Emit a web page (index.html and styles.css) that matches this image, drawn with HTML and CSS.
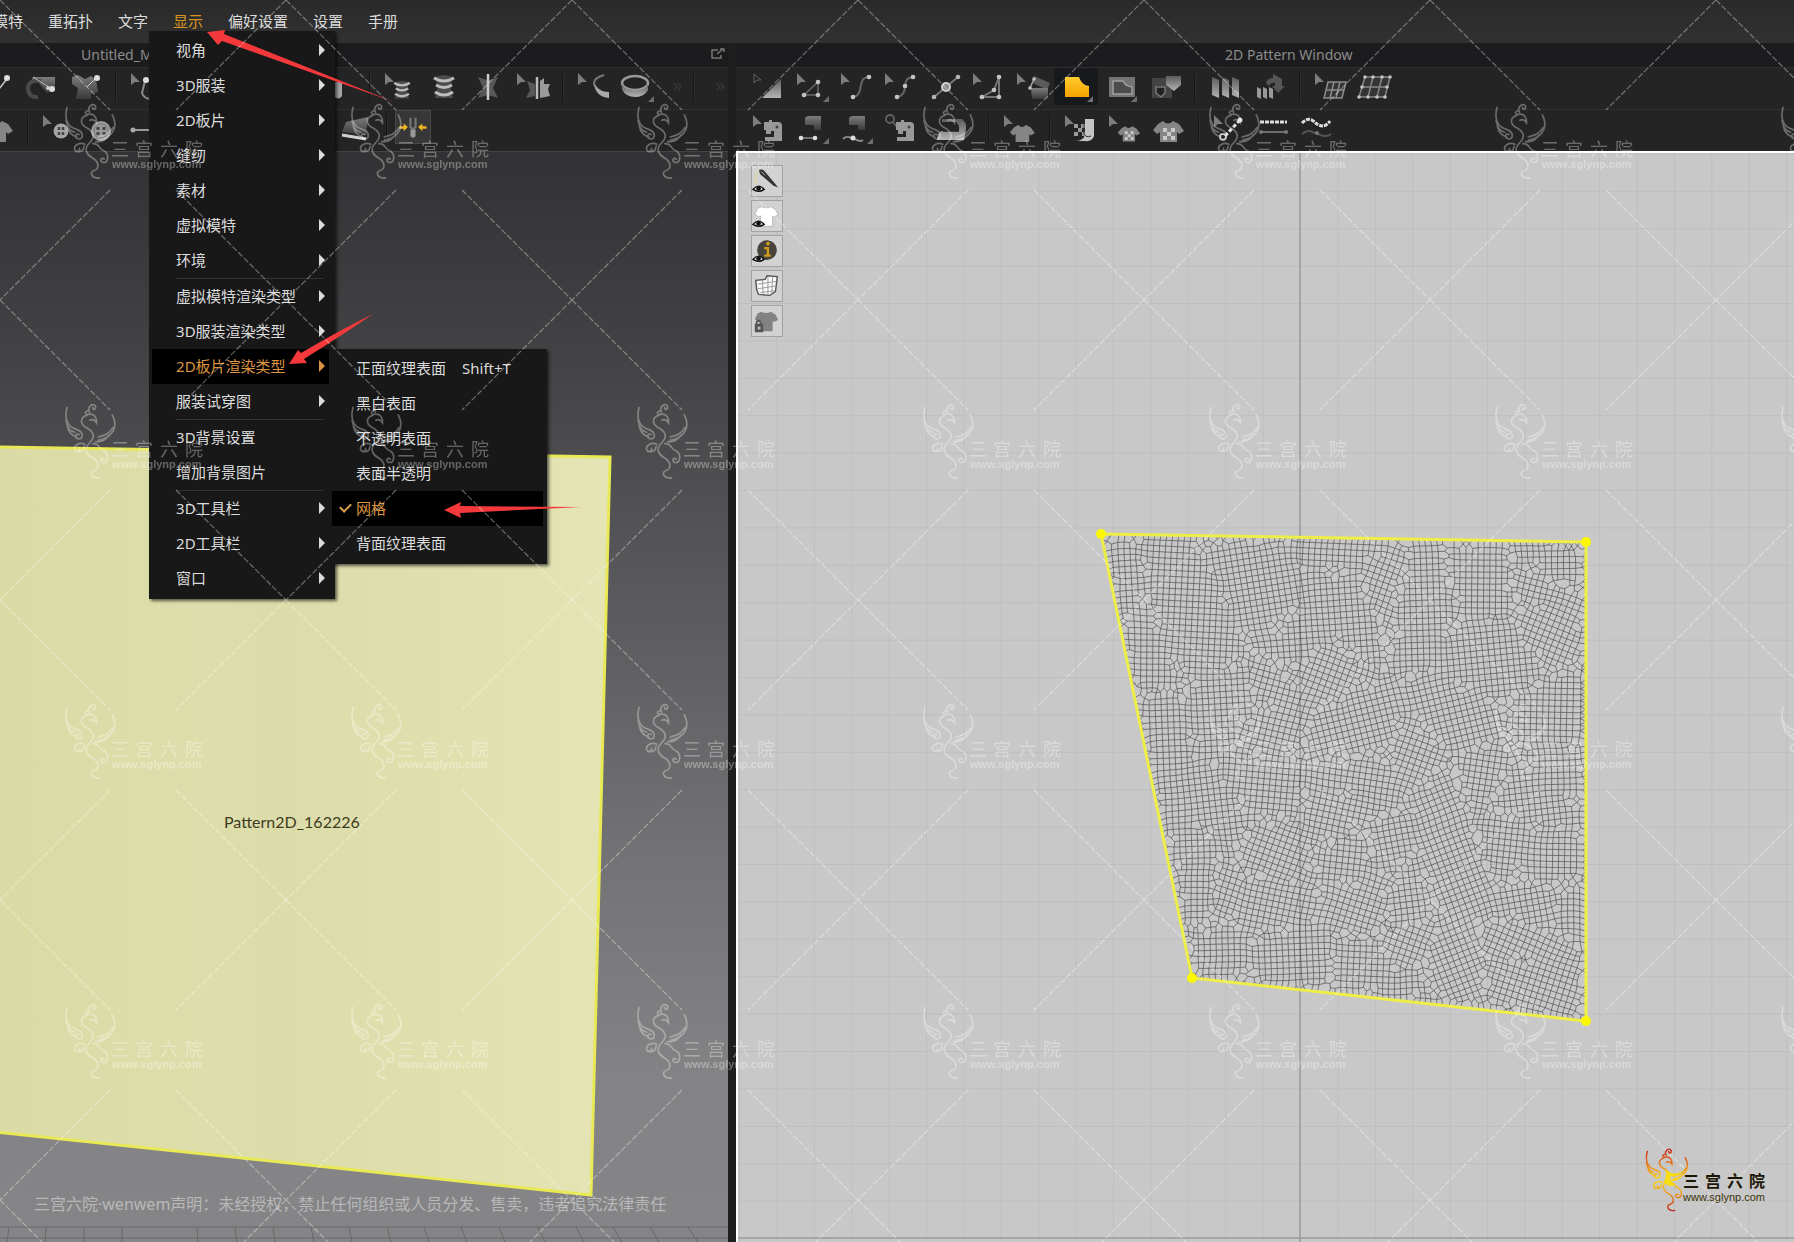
FILE: index.html
```html
<!DOCTYPE html>
<html lang="zh-CN">
<head>
    <meta charset="UTF-8">
    <meta name="viewport" content="width=device-width, initial-scale=1.0">
    <title>2D Pattern Window</title>
    <link rel="stylesheet" href="styles.css">
</head>
<body>
    <!-- icon symbols -->
    <svg class="defs" width="0" height="0" aria-hidden="true">
        <defs>
            <linearGradient id="metal" x1="0" y1="0" x2="0" y2="1">
                <stop offset="0" stop-color="#5c5c5c"/>
                <stop offset="1" stop-color="#b4b4b4"/>
            </linearGradient>
            <linearGradient id="metalDown" x1="0" y1="0" x2="0" y2="1">
                <stop offset="0" stop-color="#7c7c7c"/>
                <stop offset="1" stop-color="#3a3a3a"/>
            </linearGradient>
            <linearGradient id="gold" x1="0" y1="0" x2="0" y2="1">
                <stop offset="0" stop-color="#ffcb2e"/>
                <stop offset="1" stop-color="#f5a300"/>
            </linearGradient>
            <linearGradient id="fire" gradientUnits="userSpaceOnUse" x1="0" y1="75" x2="0" y2="300">
                <stop offset="0" stop-color="#c8201c"/>
                <stop offset="0.3" stop-color="#ee8a14"/>
                <stop offset="0.5" stop-color="#f9dc12"/>
                <stop offset="0.7" stop-color="#f0a018"/>
                <stop offset="1" stop-color="#c01818"/>
            </linearGradient>
        </defs>
        <symbol id="cursor" viewBox="0 0 40 36"><path d="M5 4v12l4-3h5z" fill="#7d7d7d"/></symbol>
        <symbol id="corner" viewBox="0 0 40 36"><path d="M37 27v6h-6z" fill="#6e6e6e"/></symbol>
        <symbol id="i-triangle" viewBox="0 0 40 36">
            <path d="M6 5v9l3-3h4z" fill="none" stroke="#5f5f5f"/>
            <path d="M33 10v19H14z" fill="url(#metal)"/>
        </symbol>
        <symbol id="i-polygon" viewBox="0 0 40 36">
            <use href="#cursor"/><use href="#corner"/>
            <path d="M26 13v13H12z" fill="none" stroke="#6a6a6a" stroke-width="1.5"/>
            <g fill="#c4c4c4"><circle cx="26" cy="13" r="2.3"/><circle cx="26" cy="26" r="2.3"/><circle cx="12" cy="26" r="2.3"/></g>
        </symbol>
        <symbol id="i-curve" viewBox="0 0 40 36">
            <use href="#cursor"/>
            <path d="M33 8c-13 0-4 19-16 20" fill="none" stroke="#666" stroke-width="2"/>
            <g fill="#c4c4c4"><circle cx="33" cy="8" r="2.3"/><circle cx="17" cy="28" r="2.3"/></g>
        </symbol>
        <symbol id="i-curve-point" viewBox="0 0 40 36">
            <use href="#cursor"/>
            <path d="M33 8c-8 1-7 5-8 9 0 6-2 10-8 11" fill="none" stroke="#666" stroke-width="2"/>
            <g fill="#c4c4c4"><circle cx="33" cy="8" r="2.3"/><circle cx="25" cy="17" r="2.3"/><circle cx="17" cy="28" r="2.3"/></g>
        </symbol>
        <symbol id="i-add-point" viewBox="0 0 40 36">
            <path d="M34 8L10 28" stroke="#777" stroke-width="2"/>
            <g fill="#b4b4b4"><circle cx="34" cy="8" r="2.3"/><circle cx="10" cy="28" r="2.3"/></g>
            <circle cx="22" cy="18" r="4" fill="#8a8a8a" stroke="#d0d0d0" stroke-width="2"/>
        </symbol>
        <symbol id="i-notch" viewBox="0 0 40 36">
            <use href="#cursor"/>
            <path d="M31 8v20H14l12-7z" fill="none" stroke="#757575" stroke-width="2"/>
            <g fill="#c4c4c4"><circle cx="31" cy="8" r="2.3"/><circle cx="26" cy="21" r="2.3"/><circle cx="31" cy="28" r="2.3"/><circle cx="14" cy="28" r="2.3"/></g>
        </symbol>
        <symbol id="i-fold" viewBox="0 0 40 36">
            <use href="#cursor"/>
            <path d="M22 7l16 7-3 7-14-7z" fill="#5a5a5a"/>
            <path d="M19 19h17v11H20z" fill="url(#metalDown)"/>
            <path d="M22 10l-4 9" stroke="#a8a8a8" stroke-width="1.5"/>
            <g fill="#c4c4c4"><circle cx="22" cy="10" r="1.8"/><circle cx="18" cy="19" r="1.8"/></g>
        </symbol>
        <symbol id="i-pattern" viewBox="0 0 40 36">
            <use href="#corner"/>
            <path d="M9 8h14c2 5 4 8 10 9v11H9z" fill="url(#gold)"/>
        </symbol>
        <symbol id="i-inner" viewBox="0 0 40 36">
            <use href="#corner"/>
            <path d="M9 8h26v20H9z" fill="#747474"/>
            <path d="M13 12h10c2 4 4 5 9 6v7H13z" fill="#4c4c4c" stroke="#a0a0a0" stroke-width="1.5"/>
        </symbol>
        <symbol id="i-trace" viewBox="0 0 40 36">
            <path d="M8 9h20v20H8z" fill="#434343"/>
            <path d="M12 18h9v6l-4 4-5-4z" fill="#222" stroke="#777" stroke-width="1.5"/>
            <path d="M22 7h15v9l-7 6-8-6z" fill="url(#metal)"/>
        </symbol>
        <symbol id="i-pleats" viewBox="0 0 40 36">
            <path d="M7 8l7 3v18l-7-3zM17 8l7 3v18l-7-3zM27 8l7 3v18l-7-3z" fill="url(#metal)"/>
        </symbol>
        <symbol id="i-pleat-sew" viewBox="0 0 40 36">
            <path d="M8 18l4 2v10l-4-2zM14 18l4 2v10l-4-2zM20 18l4 2v10l-4-2z" fill="#999"/>
            <path d="M17 14q1-5 7-5V5l9 5v7h3l-7 7-6-7h3v-3q-4-1-6 3z" fill="#555"/>
        </symbol>
        <symbol id="i-mesh-edit" viewBox="0 0 40 36">
            <use href="#cursor"/>
            <path d="M18 13h18l-4 16H14zM16 21h18M24 13l-4 16M30 13l-4 16" fill="#343434" stroke="#8c8c8c" stroke-width="1.5"/>
        </symbol>
        <symbol id="i-mesh" viewBox="0 0 40 36">
            <path d="M11 8h25l-5 20H5zM8 18h25M19 8l-5 20M28 8l-5 20" fill="#343434" stroke="#858585" stroke-width="1.5"/>
            <g fill="#c4c4c4"><circle cx="11" cy="8" r="1.8"/><circle cx="19" cy="8" r="1.8"/><circle cx="28" cy="8" r="1.8"/><circle cx="36" cy="8" r="1.8"/><circle cx="8" cy="18" r="1.8"/><circle cx="33" cy="18" r="1.8"/><circle cx="5" cy="28" r="1.8"/><circle cx="14" cy="28" r="1.8"/><circle cx="23" cy="28" r="1.8"/><circle cx="31" cy="28" r="1.8"/></g>
        </symbol>
        <symbol id="machine" viewBox="0 0 40 36">
            <path d="M16 11h5V9h3v2h6q4 0 4 4v15H17v-4h9v-6h-3v3h-5v-4h-2z" fill="#999"/>
            <circle cx="29" cy="16" r="1.500" fill="#444"/>
        </symbol>
        <symbol id="i-sew" viewBox="0 0 40 36"><use href="#cursor"/><use href="#machine"/></symbol>
        <symbol id="i-sew-segment" viewBox="0 0 40 36">
            <path d="M13 8q0-3 4-3h12v14h-7v-5h-9z" fill="url(#metalDown)"/><use href="#corner"/>
            <path d="M9 27h14" stroke="#888" stroke-width="1.5"/>
            <g fill="#ddd"><circle cx="9" cy="27" r="2.3"/><circle cx="23" cy="27" r="2.3"/></g>
        </symbol>
        <symbol id="i-sew-free" viewBox="0 0 40 36">
            <path d="M13 8q0-3 4-3h12v14h-7v-5h-9z" fill="url(#metalDown)"/><use href="#corner"/>
            <path d="M7 28c5-5 8 0 11 0s5 4 9 1" fill="none" stroke="#888" stroke-width="2"/>
            <circle cx="17" cy="27" r="2.5" fill="#ddd"/>
        </symbol>
        <symbol id="i-sew-check" viewBox="0 0 40 36">
            <circle cx="10" cy="8" r="4" fill="none" stroke="#606060" stroke-width="2"/>
            <path d="M13 11l4 5" stroke="#606060" stroke-width="2"/>
            <use href="#machine"/>
        </symbol>
        <symbol id="i-steam" viewBox="0 0 40 36">
            <path d="M11 8h20q5 4 4 10L33 29H6q0-6 4-9h18q1-6-3-9H11z" fill="url(#metal)"/>
            <path d="M12 20h16" stroke="#222" stroke-width="1.5"/>
        </symbol>
        <symbol id="shirt" viewBox="0 0 40 36">
            <path d="M15 10q5 5 10 0l6 3 5 7-5 3-2-2v10H12V21l-3 2-4-4 5-6z" fill="#858585"/>
        </symbol>
        <symbol id="i-shirt" viewBox="0 0 40 36"><use href="#cursor"/><use href="#shirt" x="7" y="6" width="32" height="29"/></symbol>
        <symbol id="i-shirt-plain" viewBox="0 0 40 36"><use href="#shirt"/><path d="M17 25h6" stroke="#333" stroke-width="2"/></symbol>
        <symbol id="i-shirt-check" viewBox="0 0 40 36">
            <use href="#shirt"/>
            <path d="M15 17h4v4h-4zM23 17h4v4h-4zM19 21h4v4h-4zM15 25h4v4h-4zM23 25h4v4h-4z" fill="#c8c8c8"/>
        </symbol>
        <symbol id="i-shirt-edit" viewBox="0 0 40 36">
            <use href="#cursor"/>
            <use href="#i-shirt-check" x="10" y="8" width="29" height="26"/>
        </symbol>
        <symbol id="i-roll" viewBox="0 0 40 36">
            <use href="#cursor"/>
            <path d="M25 8h9v17q-2 6-9 5H15q8 0 10-6z" fill="#c4c4c4"/>
            <path d="M14 13h4v4h-4zM21 13h4v4h-4zM18 17h4v4h-4zM14 21h4v4h-4zM22 21h3v4h-3z" fill="#9a9a9a"/>
            <path d="M24 9v14q2 4 7 2" fill="none" stroke="#333"/>
        </symbol>
        <symbol id="i-stitch-edit" viewBox="0 0 40 36">
            <use href="#cursor"/>
            <path d="M31 9L15 26" stroke="#e0e0e0" stroke-width="3" stroke-dasharray="4 2"/>
            <circle cx="31" cy="9" r="2.5" fill="#ddd"/><circle cx="14" cy="26" r="3" fill="none" stroke="#ccc" stroke-width="1.5"/>
        </symbol>
        <symbol id="i-stitch" viewBox="0 0 40 36">
            <path d="M7 11h27" stroke="#ddd" stroke-width="3" stroke-dasharray="4 1"/>
            <path d="M8 21h24" stroke="#6e6e6e" stroke-width="2"/>
            <circle cx="8" cy="21" r="2" fill="#777"/><circle cx="33" cy="21" r="2" fill="#777"/>
        </symbol>
        <symbol id="i-stitch-free" viewBox="0 0 40 36">
            <path d="M5 12c8-8 12-1 15 1s8 4 13-3" fill="none" stroke="#ddd" stroke-width="3" stroke-dasharray="4 1"/>
            <path d="M5 23c8-7 12 0 15 0s8 5 14 0" fill="none" stroke="#555" stroke-width="2"/>
            <circle cx="20" cy="22" r="2" fill="#777"/>
        </symbol>
        <symbol id="i-needle" viewBox="0 0 40 36"><path d="M22 20l7-9" stroke="#ccc" stroke-width="1.5"/><circle cx="30" cy="9" r="3" fill="#ddd"/></symbol>
        <symbol id="i-lasso" viewBox="0 0 40 36">
            <path d="M12 8h22v14l-8 2-8-10-8-2z" fill="url(#metalDown)"/>
            <path d="M20 12q-13-2-13 8 1 9 10 8" fill="none" stroke="#4a4a4a" stroke-width="4"/>
            <path d="M12 8l19 12" stroke="#bbb"/><circle cx="31" cy="20" r="3" fill="#ddd"/><circle cx="27" cy="19" r="2" fill="#ccc"/>
        </symbol>
        <symbol id="i-pin-shirt" viewBox="0 0 40 36">
            <path d="M7 8l6-2 7 4 6-3 5 4 2 12-7 2v5H11l2-11-6-4z" fill="url(#metalDown)"/>
            <path d="M22 18l9-9" stroke="#ccc"/><circle cx="32" cy="9" r="3" fill="#ddd"/>
        </symbol>
        <symbol id="i-fold-pin" viewBox="0 0 40 36">
            <use href="#cursor"/><path d="M19 12l-3 12q2 6 9 6h8l-9-18z" fill="none" stroke="#8a8a8a" stroke-width="2"/><circle cx="20" cy="11" r="3" fill="#ddd"/>
        </symbol>
        <symbol id="i-cylinder" viewBox="0 0 40 36"><path d="M12 7v22" stroke="#444" stroke-width="2"/><path d="M15 13h8v14q-4 5-8 0z" fill="#a5a5a5"/></symbol>
        <symbol id="body" viewBox="0 0 40 36">
            <path d="M10 8l10-2 10 2-4 9 3 12H11l3-12z" fill="#4c4c4c"/>
            <path d="M10 9q10 6 20 0M12 16q8 5 16 0M11 23q9 6 18 0" fill="none" stroke="#bcbcbc" stroke-width="3"/>
        </symbol>
        <symbol id="i-body" viewBox="0 0 40 36"><use href="#body"/></symbol>
        <symbol id="i-body-edit" viewBox="0 0 40 36"><use href="#cursor"/><use href="#body" x="6" y="7" width="32" height="28"/></symbol>
        <symbol id="i-symmetry" viewBox="0 0 40 36"><path d="M10 8l9 3h3l8-3-5 11 5 10-10-3-10 3 5-10z" fill="#575757"/><path d="M20 5v26" stroke="#ccc" stroke-width="2.5"/></symbol>
        <symbol id="i-symmetry-edit" viewBox="0 0 40 36">
            <use href="#cursor"/><path d="M15 12l8 3v12l-9 2 4-8z" fill="#575757"/><path d="M25 8v22" stroke="#bbb" stroke-width="2.5"/><path d="M28 12l4-3v6h6l-2 5 2 7-10 2z" fill="#9a9a9a"/>
        </symbol>
        <symbol id="i-tape-edit" viewBox="0 0 40 36">
            <use href="#cursor"/><path d="M31 6q-10 3-10 8t14 13" fill="none" stroke="#777" stroke-width="2"/><path d="M21 15q4 8 15 8v6q-13-1-15-14z" fill="#aaa"/>
        </symbol>
        <symbol id="i-tape" viewBox="0 0 40 36">
            <ellipse cx="18" cy="14" rx="13" ry="7" fill="none" stroke="#999" stroke-width="2.5"/><path d="M5 15q2 7 13 7t13-7v6q-4 7-12 7-11 0-14-8z" fill="url(#metal)"/><use href="#corner"/>
        </symbol>
        <symbol id="i-button-edit" viewBox="0 0 40 36"><use href="#cursor"/><circle cx="23" cy="20" r="7.5" fill="#a5a5a5"/><path d="M21 16v9M25 16v9" stroke="#444" stroke-width="2.5" stroke-dasharray="3 2"/></symbol>
        <symbol id="i-button" viewBox="0 0 40 36"><circle cx="19" cy="20" r="10" fill="#9a9a9a"/><circle cx="19" cy="20" r="7" fill="none" stroke="#777"/><path d="M16 16v9M22 16v9" stroke="#444" stroke-width="3" stroke-dasharray="3 2"/></symbol>
        <symbol id="i-buttonhole" viewBox="0 0 40 36"><path d="M7 19h28" stroke="#999" stroke-width="2"/><circle cx="7" cy="19" r="2.5" fill="#aaa"/></symbol>
        <symbol id="i-flatten" viewBox="0 0 40 36"><path d="M10 11l22-5-2 18-24-3z" fill="url(#metalDown)"/><path d="M6 24l24 4" stroke="#d0d0d0" stroke-width="3"/></symbol>
        <symbol id="i-zipper" viewBox="0 0 40 36">
            <path d="M17 7v11q3 4 6 0V7" fill="none" stroke="#777" stroke-width="2.5"/><path d="M17 21h6v8q-3 3-6 0z" fill="#999"/>
            <path d="M4 17h5v-3l5 4-5 5v-3H4zM36 17h-5v-3l-5 4 5 5v-3h5z" fill="#edb51f"/>
        </symbol>
        <symbol id="eye" viewBox="0 0 32 32"><path d="M1 25q6-7 12 0-6 4-12 0z" fill="#eee" stroke="#111" stroke-width="1.5"/><circle cx="7" cy="24" r="2.5" fill="#111"/></symbol>
        <symbol id="tee" viewBox="0 0 32 32"><path d="M10 6q5 3 10 0l5 3 3 6-5 2-1-1v11H9V16l-2 1-4-3 3-6z"/></symbol>
        <symbol id="phoenix" viewBox="100 70 170 235">
            <g fill="none" stroke-width="5" stroke-linecap="round">
                <path d="M115 86c-8 30-2 58 30 66 22 8 18 30 4 28-14-4-8-20 2-13"/>
                <path d="M112 124c4 24 12 34 26 36M116 142c4 20 14 28 28 32"/>
                <path d="M250 108c16 30 8 66-42 76M252 146c-12 20-26 24-44 28M240 168c-10 18-24 22-40 20"/>
                <path d="M182 100c-8-16 10-30 18-18 2 12-10 12-9 4M177 96c-12 4-8 12 4 10 14-2 24 10 22 26-6-10-12-12-20-8"/>
                <path d="M176 108c-28 10-20 30 0 40 22 14 22 28 6 44-20 20-6 36 8 44 24 14 20 34 6 38-16 4-8 26 16 22"/>
                <path d="M168 196c-16-8-34 4-30 16 4 10 18 6 14-4M166 202c-2 14-10 18-22 14"/>
                <path d="M192 194c22-2 16 18 34 22 16 10 12 36-4 34-12-4-4-18 4-10"/>
            </g>
        </symbol>
    </svg>

    <header class="menubar">
        <ul class="menubar-list">
            <li><button type="button">模特</button></li>
            <li><button type="button">重拓扑</button></li>
            <li><button type="button">文字</button></li>
            <li class="open">
                <button type="button" class="current">显示</button>
                <ul class="menu">
                    <li><button type="button" class="more">视角</button></li>
                    <li><button type="button" class="more">3D服装</button></li>
                    <li><button type="button" class="more">2D板片</button></li>
                    <li><button type="button" class="more">缝纫</button></li>
                    <li><button type="button" class="more">素材</button></li>
                    <li><button type="button" class="more">虚拟模特</button></li>
                    <li><button type="button" class="more">环境</button></li>
                    <li class="separator"></li>
                    <li><button type="button" class="more">虚拟模特渲染类型</button></li>
                    <li><button type="button" class="more">3D服装渲染类型</button></li>
                    <li class="open">
                        <button type="button" class="more selected">2D板片渲染类型</button>
                        <ul class="menu submenu">
                            <li><button type="button">正面纹理表面 <span class="shortcut">Shift+T</span></button></li>
                            <li><button type="button">黑白表面</button></li>
                            <li><button type="button">不透明表面</button></li>
                            <li><button type="button">表面半透明</button></li>
                            <li><button type="button" class="selected checked">网格</button></li>
                            <li><button type="button">背面纹理表面</button></li>
                        </ul>
                    </li>
                    <li><button type="button" class="more">服装试穿图</button></li>
                    <li class="separator"></li>
                    <li><button type="button">3D背景设置</button></li>
                    <li><button type="button">增加背景图片</button></li>
                    <li class="separator"></li>
                    <li><button type="button" class="more">3D工具栏</button></li>
                    <li><button type="button" class="more">2D工具栏</button></li>
                    <li><button type="button" class="more">窗口</button></li>
                </ul>
            </li>
            <li><button type="button">偏好设置</button></li>
            <li><button type="button">设置</button></li>
            <li><button type="button">手册</button></li>
        </ul>
    </header>

    <main class="workspace">
        <section class="panel panel-3d">
            <div class="panel-title">
                <span>Untitled_M</span>
                <button type="button" class="popout" aria-label="popout">
                    <svg width="16" height="14" viewBox="0 0 16 14"><path d="M8 3H2v8h9V8M7 7l6-5M10 2h4v3" fill="none" stroke="#777" stroke-width="1.5"/></svg>
                </button>
            </div>
            <div class="toolbar">
                <button type="button" class="tool" aria-label="needle"><svg><use href="#i-needle"/></svg></button>
                <button type="button" class="tool" aria-label="lasso"><svg><use href="#i-lasso"/></svg></button>
                <button type="button" class="tool" aria-label="pin"><svg><use href="#i-pin-shirt"/></svg></button>
                <span class="divider"></span>
                <button type="button" class="tool" aria-label="fold"><svg><use href="#i-fold-pin"/></svg></button>
                <button type="button" class="tool" aria-label="sew"><svg><use href="#i-sew"/></svg></button>
                <button type="button" class="tool" aria-label="shirt"><svg><use href="#i-shirt"/></svg></button>
                <button type="button" class="tool" aria-label="steam"><svg><use href="#i-steam"/></svg></button>
                <span class="divider"></span>
                <button type="button" class="tool" aria-label="cylinder"><svg><use href="#i-cylinder"/></svg></button>
                <span class="divider"></span>
                <button type="button" class="tool" aria-label="edit body line"><svg><use href="#i-body-edit"/></svg></button>
                <button type="button" class="tool" aria-label="body line"><svg><use href="#i-body"/></svg></button>
                <button type="button" class="tool" aria-label="symmetry"><svg><use href="#i-symmetry"/></svg></button>
                <button type="button" class="tool" aria-label="edit symmetry"><svg><use href="#i-symmetry-edit"/></svg></button>
                <span class="divider"></span>
                <button type="button" class="tool" aria-label="edit tape"><svg><use href="#i-tape-edit"/></svg></button>
                <button type="button" class="tool" aria-label="tape"><svg><use href="#i-tape"/></svg></button>
                <span class="overflow">»</span>
                <span class="divider"></span>
                <span class="overflow">»</span>
            </div>
            <div class="toolbar">
                <button type="button" class="tool" aria-label="shirt"><svg><use href="#i-shirt-plain"/></svg></button>
                <span class="divider"></span>
                <button type="button" class="tool" aria-label="edit button"><svg><use href="#i-button-edit"/></svg></button>
                <button type="button" class="tool" aria-label="button"><svg><use href="#i-button"/></svg></button>
                <button type="button" class="tool" aria-label="buttonhole"><svg><use href="#i-buttonhole"/></svg></button>
                <button type="button" class="tool" aria-label="tape"><svg><use href="#i-tape"/></svg></button>
                <button type="button" class="tool" aria-label="stitch"><svg><use href="#i-stitch"/></svg></button>
                <button type="button" class="tool" aria-label="curve"><svg><use href="#i-curve"/></svg></button>
                <span class="divider"></span>
                <span class="divider"></span>
                <button type="button" class="tool" aria-label="flatten"><svg><use href="#i-flatten"/></svg></button>
                <span class="divider"></span>
                <button type="button" class="tool active" aria-label="zipper"><svg><use href="#i-zipper"/></svg></button>
            </div>
            <div class="viewport view-3d">
                <svg class="canvas" id="garment">
                    <defs>
                        <linearGradient id="cloth" x1="0" y1="0" x2="1" y2="0">
                            <stop offset="0" stop-color="#dadaa5"/>
                            <stop offset="0.35" stop-color="#dedeac"/>
                            <stop offset="0.45" stop-color="#dcdcaa"/>
                            <stop offset="1" stop-color="#e4e4b4"/>
                        </linearGradient>
                    </defs>
                    <g transform="translate(0 -152)">
                        <g id="floor" stroke="#68686a" fill="none">
                            <path d="M0 1227h728M0 1238h730"/>
                            <path d="M9 1227l-2 15M46 1227l-1 15M84 1227v15M122 1227v15M197 1227l1 15M235 1227l2 15M273 1227l2 15M311 1227l3 15M349 1227l3 15M387 1227l4 15M424 1227l5 15M461 1227l6 15M499 1227l6 15M538 1227l7 15M576 1227l8 15M613 1227l9 15M650 1227l9 15M688 1227l10 15"/>
                        </g>
                        <path d="M-4 447L610 457 591 1195-4 1132z" fill="url(#cloth)" stroke="#e9e956" stroke-width="3"/>
                        <text x="224" y="828" class="piece-name">Pattern2D_162226</text>
                        <text x="34" y="1210" class="notice">三宫六院·wenwem声明：未经授权，禁止任何组织或人员分发、售卖，违者追究法律责任</text>
                    </g>
                </svg>
            </div>
        </section>

        <section class="panel panel-2d">
            <div class="panel-title"><h1>2D Pattern Window</h1></div>
            <div class="toolbar">
                <button type="button" class="tool" aria-label="transform"><svg><use href="#i-triangle"/></svg></button>
                <button type="button" class="tool" aria-label="edit polygon"><svg><use href="#i-polygon"/></svg></button>
                <button type="button" class="tool" aria-label="edit curve"><svg><use href="#i-curve"/></svg></button>
                <button type="button" class="tool" aria-label="curve point"><svg><use href="#i-curve-point"/></svg></button>
                <button type="button" class="tool" aria-label="add point"><svg><use href="#i-add-point"/></svg></button>
                <button type="button" class="tool" aria-label="notch"><svg><use href="#i-notch"/></svg></button>
                <button type="button" class="tool" aria-label="fold"><svg><use href="#i-fold"/></svg></button>
                <button type="button" class="tool pressed" aria-label="pattern"><svg><use href="#i-pattern"/></svg></button>
                <button type="button" class="tool" aria-label="internal shape"><svg><use href="#i-inner"/></svg></button>
                <button type="button" class="tool" aria-label="trace"><svg><use href="#i-trace"/></svg></button>
                <span class="divider"></span>
                <button type="button" class="tool" aria-label="pleats"><svg><use href="#i-pleats"/></svg></button>
                <button type="button" class="tool" aria-label="sew pleats"><svg><use href="#i-pleat-sew"/></svg></button>
                <span class="divider"></span>
                <button type="button" class="tool" aria-label="edit grading"><svg><use href="#i-mesh-edit"/></svg></button>
                <button type="button" class="tool" aria-label="grading"><svg><use href="#i-mesh"/></svg></button>
            </div>
            <div class="toolbar">
                <button type="button" class="tool" aria-label="edit sewing"><svg><use href="#i-sew"/></svg></button>
                <button type="button" class="tool" aria-label="segment sewing"><svg><use href="#i-sew-segment"/></svg></button>
                <button type="button" class="tool" aria-label="free sewing"><svg><use href="#i-sew-free"/></svg></button>
                <button type="button" class="tool" aria-label="check sewing"><svg><use href="#i-sew-check"/></svg></button>
                <button type="button" class="tool wide" aria-label="steam"><svg><use href="#i-steam"/></svg></button>
                <span class="divider"></span>
                <button type="button" class="tool" aria-label="edit texture"><svg><use href="#i-shirt"/></svg></button>
                <span class="divider"></span>
                <button type="button" class="tool" aria-label="fabric"><svg><use href="#i-roll"/></svg></button>
                <button type="button" class="tool" aria-label="edit print"><svg><use href="#i-shirt-edit"/></svg></button>
                <button type="button" class="tool" aria-label="print"><svg><use href="#i-shirt-check"/></svg></button>
                <span class="divider"></span>
                <button type="button" class="tool" aria-label="edit topstitch"><svg><use href="#i-stitch-edit"/></svg></button>
                <button type="button" class="tool" aria-label="segment topstitch"><svg><use href="#i-stitch"/></svg></button>
                <button type="button" class="tool" aria-label="free topstitch"><svg><use href="#i-stitch-free"/></svg></button>
            </div>
            <div class="viewport view-2d">
                <svg class="canvas">
                    <defs>
                        <pattern id="grid" patternUnits="userSpaceOnUse" x="1300" y="1238" width="37.4" height="37.4">
                            <path d="M0 0.5H38M0.5 0V38" stroke="#bebebe" fill="none"/>
                        </pattern>
                    </defs>
                    <g transform="translate(-738 -153)">
                        <rect x="738" y="153" width="4000" height="3000" fill="url(#grid)"/>
                        <path d="M1300 153V3000M738 1238H4000" stroke="#9a9a9a" stroke-width="1.5"/>
                        <path id="mesh" fill="none" stroke="#3c3c40" stroke-opacity="0.66" stroke-width="0.9"/>
                        <path d="M1101 534L1586 542 1586 1021 1192 978z" fill="none" stroke="#eeee48" stroke-width="3"/>
                        <g fill="#fcf800">
                            <circle cx="1101" cy="534" r="5"/><circle cx="1586" cy="542" r="5"/>
                            <circle cx="1586" cy="1021" r="5"/><circle cx="1192" cy="978" r="5"/>
                        </g>
                    </g>
                </svg>
                <div class="side-tools">
                    <button type="button" aria-label="show stitches"><svg viewBox="0 0 32 32"><path d="M8 4q3-1 5 1l15 18-5-2L9 9q-2-3-1-5z" fill="#333"/><path d="M10 6l4 4" stroke="#bbb"/><path d="M6 7q-3 5-2 12" fill="none" stroke="#ddd6a4" stroke-width="2"/><use href="#eye"/></svg></button>
                    <button type="button" aria-label="show garment"><svg viewBox="0 0 32 32"><use href="#tee" fill="#fff" stroke="#bbb"/><use href="#eye"/></svg></button>
                    <button type="button" aria-label="show info"><svg viewBox="0 0 32 32"><circle cx="16" cy="15" r="10.500" fill="#47433c"/><path d="M13 13h4v8M13 21h7" fill="none" stroke="#d09a1c" stroke-width="2.500"/><circle cx="17" cy="8" r="2" fill="#d09a1c"/><use href="#eye"/></svg></button>
                    <button type="button" aria-label="show mesh"><svg viewBox="0 0 32 32"><path d="M4 10l10-1 2-4 11 1-2 16-6 4-12-1-2-5z" fill="#fafafa" stroke="#555" stroke-width="1.5"/><path d="M6 14l20-3M6 19l19-3M9 23l15-2M11 9l1 16M17 6v19M22 6l-1 19" stroke="#999" fill="none"/></svg></button>
                    <button type="button" aria-label="lock"><svg viewBox="0 0 32 32"><use href="#tee" fill="#828282"/><path d="M5 20v-3q2-3 4 0v3" fill="none" stroke="#555" stroke-width="2"/><path d="M3 19h9v9H3z" fill="#555"/><path d="M6 22h3v3H6z" fill="#bbb"/></svg></button>
                </div>
            </div>
        </section>
    </main>

    <!-- red pointers, watermark and logo lie over everything -->
    <svg class="overlay" aria-hidden="true">
        <defs>
            <pattern id="watermark" patternUnits="userSpaceOnUse" width="286" height="300">
                <g stroke="#fff" stroke-opacity="0.36" stroke-width="1.2" stroke-dasharray="6 2">
                    <path d="M0 0L110 110M176 190L286 300M286 0L176 110M110 190L0 300"/>
                </g>
                <g opacity="0.32" fill="#fff" stroke="#fff">
                    <use href="#phoenix" x="62" y="102" width="57" height="79"/>
                    <g stroke="none">
                        <text x="111 135 160 185" y="156" class="brand">三宫六院</text>
                        <text x="112" y="168" class="brand-url">www.sglynp.com</text>
                    </g>
                </g>
            </pattern>
        </defs>
        <g fill="#f4393c">
            <path d="M207 32L225 30 224 34 394 102 222 41 218 45z"/>
            <path d="M289 364L298 350 301 353Q340 330 373 314 344 334 304 359L307 363z"/>
            <path d="M444 510L461 502 460 506 581 507 460 513 461 518z"/>
        </g>
        <rect width="100%" height="100%" fill="url(#watermark)"/>
    </svg>
    <div class="logo">
        <svg width="48" height="66" viewBox="100 70 170 235" aria-hidden="true"><use href="#phoenix" x="100" y="70" width="170" height="235" stroke="url(#fire)"/><path d="M176 150q14 20-4 44 24 24 40 10-20-10-14-30 24 2 44-18-26 12-44 6z" fill="#f9dc12"/></svg>
        <div class="logo-text">
            <div class="logo-name"><span>三</span><span>宫</span><span>六</span><span>院</span></div>
            <a href="#">www.sglynp.com</a>
        </div>
    </div>

    <script src="mesh.js"></script>
</body>
</html>
```

FILE: styles.css
```css
* {
    box-sizing: border-box;
}
body {
    display: flex;
    flex-direction: column;
    height: 100vh;
    margin: 0;
    overflow: hidden;
    background-color: #242425;
    color: #dcdcdc;
    font-family: "Noto Sans", "Noto Sans CJK SC", sans-serif;
    font-size: 15px;
}
ul {
    margin: 0;
    padding: 0;
    list-style: none;
}
button {
    padding: 0;
    border: none;
    background: none;
    color: inherit;
    font: inherit;
    white-space: nowrap;
}
.defs {
    position: absolute;
}

/* menu bar */
.menubar {
    height: 43px;
    background: linear-gradient(#2a2a2b, #313132);
}
.menubar-list {
    display: flex;
    gap: 25px;
    height: 100%;
    margin-left: -7px;
}
.menubar-list > li > button {
    height: 40px;
}
.open {
    position: relative;
}
.menubar .current {
    color: #d9951e;
}
.menu {
    position: absolute;
    z-index: 10;
    top: 31px;
    left: -24px;
    width: 186px;
    padding: 2px 6px 3px 3px;
    background-color: #181818;
    box-shadow: 2px 2px 3px rgba(0,0,0,0.6);
}
.menu button {
    display: flex;
    align-items: center;
    position: relative;
    width: 100%;
    height: 35px;
    padding: 0 0 2px 24px;
    text-align: left;
}
.menu .more::after {
    content: "";
    margin-left: auto;
    margin-right: 4px;
    border: 6px solid transparent;
    border-left-color: currentColor;
    border-right-width: 0;
}
.menu .selected {
    background-color: #000;
    color: #dc9440;
}
.separator {
    height: 1px;
    margin: 0 6px 0 24px;
    background-color: #333;
}
.submenu {
    top: 0;
    left: 180px;
    width: 215px;
    padding: 2px 4px 3px 0;
}
.shortcut {
    margin-left: 16px;
}
.checked::before {
    content: "";
    position: absolute;
    left: 8px;
    top: 12px;
    width: 9px;
    height: 5px;
    border-left: 2px solid #e0a04c;
    border-bottom: 2px solid #e0a04c;
    transform: rotate(-45deg);
}

/* panels */
.workspace {
    display: flex;
    flex: 1;
    min-height: 0;
}
.panel {
    display: flex;
    flex-direction: column;
    min-width: 0;
}
.panel-3d {
    flex: 0 0 41%;
    border-right: 8px solid #1f1f1f;
}
.panel-2d {
    flex: 1;
}
.panel-title {
    display: flex;
    align-items: center;
    height: 24px;
    background-color: #1c1c1e;
    color: #8c8c8c;
    font-size: 14px;
}
.panel-3d .panel-title {
    justify-content: space-between;
    padding: 0 2px 2px 81px;
}
.panel-2d .panel-title {
    justify-content: center;
    padding: 0 0 2px 48px;
}
.panel-title h1 {
    margin: 0;
    font-size: 14px;
    font-weight: normal;
}
.popout svg {
    display: block;
}
.toolbar {
    display: flex;
    align-items: flex-start;
    height: 42px;
    overflow: hidden;
    border-top: 1px solid #303030;
    background-color: #242425;
}
.panel-3d .tool:first-child {
    margin-left: -25px;
}
.panel-2d .toolbar {
    padding-left: 10px;
}
.tool {
    display: flex;
    flex: none;
    align-items: center;
    justify-content: center;
    width: 44px;
    height: 37px;
}
.tool svg {
    width: 40px;
    height: 36px;
}
.wide {
    width: 58px;
}
.tool.active {
    width: 36px;
    height: 34px;
    border: 1px solid #484848;
    background-color: #373738;
}
.pressed {
    background-color: #17191d;
}
.divider {
    flex: none;
    width: 17px;
    height: 28px;
    margin-top: 5px;
    background: linear-gradient(90deg, transparent 8px, #161616 8px, #161616 9px, #2e2e2e 9px, #2e2e2e 10px, transparent 10px);
}
.overflow {
    width: 28px;
    padding-right: 2px;
    color: #363636;
    font-size: 20px;
    line-height: 34px;
    text-align: right;
}
.viewport {
    position: relative;
    flex: 1;
    min-height: 0;
}
.canvas {
    display: block;
    width: 100%;
    height: 100%;
}
.view-3d {
    border-top: 1px solid #444;
    background: linear-gradient(#323234, #444446 20%, #5c5c5e 43%, #747476 66%, #838385 85%, #858587);
}
.view-2d {
    border-top: 2px solid #fff;
    border-left: 2px solid #fff;
    background-color: #c8c8c8;
}
.piece-name {
    fill: #3c3b1e;
    font-family: Lato, sans-serif;
    font-size: 16px;
}
.notice {
    fill: #b8b8b9;
    font-size: 16px;
}
.side-tools {
    position: absolute;
    top: 12px;
    left: 13px;
    display: flex;
    flex-direction: column;
    gap: 3px;
}
.side-tools button {
    width: 32px;
    height: 32px;
    border: 1px solid #a2a2a2;
    background-color: #d2d2d2;
}
.side-tools svg {
    display: block;
    width: 30px;
    height: 30px;
}

/* layers over the whole window */
.overlay {
    position: absolute;
    z-index: 20;
    top: 0;
    left: 0;
    width: 100%;
    height: 100%;
    pointer-events: none;
}
.brand {
    font-family: "Noto Sans CJK SC", sans-serif;
    font-size: 18px;
}
.brand-url {
    font-family: "Liberation Sans", sans-serif;
    font-size: 11px;
    font-weight: bold;
}
.logo {
    position: absolute;
    z-index: 21;
    right: 29px;
    bottom: 29px;
    display: flex;
}
.logo-text {
    margin: 26px 0 0 -8px;
    color: #1c1606;
    font-family: "Liberation Sans", "Noto Sans CJK SC", sans-serif;
}
.logo-name {
    display: flex;
    justify-content: space-between;
    font-size: 16px;
    font-weight: bold;
    line-height: 18px;
}
.logo a {
    display: block;
    color: #3c3208;
    font-size: 11px;
    line-height: 12px;
    text-decoration: none;
}
```

FILE: mesh.js
```js
// quad mesh of the pattern piece: patches of turned grids, joined and relaxed
const corners = [[1101, 534], [1586, 542], [1586, 1021], [1192, 978]];
const size = 6;
const reach = 11;

let seed = 7;
function random() {
    seed = (seed * 16807) % 2147483647;
    return seed / 2147483647;
}

// distance to the nearest edge, negative outside
function inside(x, y) {
    let min = Infinity;
    for (let i = 0; i < 4; i++) {
        const [ax, ay] = corners[i];
        const [bx, by] = corners[(i + 1) % 4];
        const len = Math.hypot(bx - ax, by - ay);
        min = Math.min(min, ((bx - ax) * (y - ay) - (by - ay) * (x - ax)) / len);
    }
    return min;
}

const patches = [];
for (let i = 0; i < 60; i++) {
    const x = 1100 + random() * 490;
    const y = 530 + random() * 490;
    const turn = inside(x, y) < 35 ? 0.12 : 0.8;
    patches.push({ x: x, y: y, a: (random() - 0.5) * turn });
}

function nearest(x, y) {
    let best = null;
    let dist = Infinity;
    for (const p of patches) {
        const d = (p.x - x) ** 2 + (p.y - y) ** 2;
        if (d < dist) { dist = d; best = p; }
    }
    return best;
}

const points = [];
let cells = new Map();
function key(x, y) {
    return Math.floor(x / reach) * 10000 + Math.floor(y / reach);
}
function add(p, i) {
    const k = key(p.x, p.y);
    if (!cells.has(k)) cells.set(k, []);
    cells.get(k).push(i);
}
function index() {
    cells = new Map();
    points.forEach(add);
}
function dist(a, b) {
    return Math.hypot(a.x - b.x, a.y - b.y);
}
function around(p, radius) {
    const found = [];
    for (let dx = -reach; dx <= reach; dx += reach) {
        for (let dy = -reach; dy <= reach; dy += reach) {
            for (const i of cells.get(key(p.x + dx, p.y + dy)) || []) {
                const d = dist(points[i], p);
                if (d > 0 && d < radius) found.push(i);
            }
        }
    }
    return found;
}
function place(p, gap) {
    if (around(p, gap).length) return;
    points.push(p);
    add(p, points.length - 1);
}

// two points are joined when no third one is closer to both
function neighbours(p) {
    const near = around(p, reach);
    return near.filter(j => {
        const d = dist(p, points[j]);
        return !near.some(k => k !== j && dist(p, points[k]) < d * 0.96 && dist(points[j], points[k]) < d * 0.96);
    });
}

// outline first, then the patches
for (let i = 0; i < 4; i++) {
    const [ax, ay] = corners[i];
    const [bx, by] = corners[(i + 1) % 4];
    const count = Math.round(Math.hypot(bx - ax, by - ay) / size);
    for (let n = 0; n < count; n++) {
        place({ x: ax + (bx - ax) * n / count, y: ay + (by - ay) * n / count, fixed: true }, 2);
    }
}
for (const patch of patches) {
    const c = Math.cos(patch.a);
    const s = Math.sin(patch.a);
    for (let u = -35; u <= 35; u++) {
        for (let v = -35; v <= 35; v++) {
            const p = { x: patch.x + (u * c - v * s) * size, y: patch.y + (u * s + v * c) * size };
            if (inside(p.x, p.y) > 3 && nearest(p.x, p.y) === patch) place(p, size * 0.68);
        }
    }
}

// fill what is left open between the patches
function fill(gap) {
    for (let y = 534; y < 1021; y += 1) {
        for (let x = 1101; x < 1586; x += 1) {
            if (inside(x, y) > 3) place({ x: x + 0.01, y: y + 0.01 }, gap);
        }
    }
}

function relax(steps) {
    for (let step = 0; step < steps; step++) {
        const moved = points.map(p => {
            const near = neighbours(p);
            if (near.length < 3 || p.fixed) return p;
            let x = 0;
            let y = 0;
            near.forEach(i => { x += points[i].x; y += points[i].y; });
            return { x: (p.x + x / near.length) / 2, y: (p.y + y / near.length) / 2 };
        });
        moved.forEach((p, i) => { points[i] = p; });
        index();
    }
}

fill(size * 0.8);
relax(2);
fill(size * 0.8);
relax(1);

let d = '';
points.forEach((p, i) => {
    for (const j of neighbours(p)) {
        if (j > i) d += `M${p.x.toFixed(1)} ${p.y.toFixed(1)}L${points[j].x.toFixed(1)} ${points[j].y.toFixed(1)}`;
    }
});
document.getElementById('mesh').setAttribute('d', d);
```
